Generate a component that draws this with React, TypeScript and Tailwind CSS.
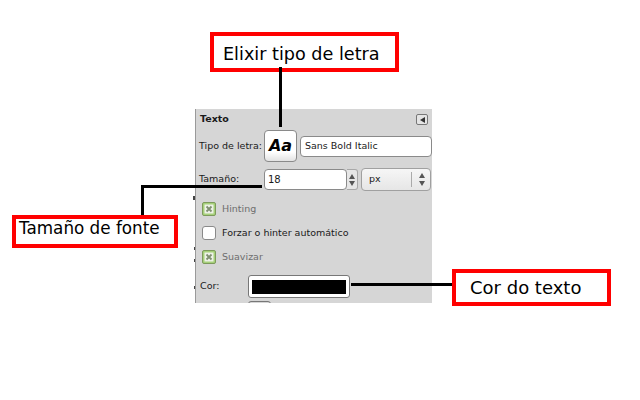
const gtkBorder = 'border border-[#8a8a8a] bg-white rounded-[4px]';

function Callout({ className, children }: { className: string; children: string }) {
  return (
    <div className={`absolute border-4 border-[#ff0000] bg-white flex items-center leading-none text-black font-['DejaVu_Sans',sans-serif] ${className}`}>
      {children}
    </div>
  );
}

function Check({ checked, label }: { checked?: boolean; label: string }) {
  return (
    <div className="flex h-[24px] items-center pl-[6px]">
      {checked ? (
        <span className="flex size-[14px] items-center justify-center rounded-[2px] border border-[#7d9a5c] bg-[#a6d07a]">
          <svg width="10" height="10" viewBox="0 0 10 10">
            <rect x="0.5" y="0.5" width="9" height="9" fill="#eef2e8" />
            <path d="M2.5 2.5L7.5 7.5M7.5 2.5L2.5 7.5" stroke="#7f8f70" strokeWidth="1.8" />
          </svg>
        </span>
      ) : (
        <span className="size-[14px] rounded-[3px] border border-[#8a8a8a] bg-white" />
      )}
      <span className={`ml-[6px] text-[9.5px] ${checked ? 'text-[#6e6e6e]' : 'text-[#1a1a1a]'}`}>{label}</span>
    </div>
  );
}

function Arrows({ gap }: { gap: string }) {
  return (
    <span className={`flex flex-col items-center ${gap}`}>
      <span className="h-0 w-0 border-x-[3px] border-b-[5px] border-x-transparent border-b-[#555]" />
      <span className="h-0 w-0 border-x-[3px] border-t-[5px] border-x-transparent border-t-[#555]" />
    </span>
  );
}

export default function App() {
  return (
    <div className="relative h-[400px] w-[640px] overflow-hidden bg-white pl-[195px] pt-[109px] font-['DejaVu_Sans',sans-serif]">
      <div className="h-[194px] w-[237px] overflow-hidden border-l border-[#9a9a9a] bg-[#d6d6d6] text-[#1a1a1a]">
        <div className="flex h-[21px] items-center justify-between px-[4px]">
          <span className="text-[9.5px] font-bold">Texto</span>
          <span className="flex h-[11px] w-[12px] items-center justify-center rounded-[2px] border border-[#777] bg-[#e4e4e4]">
            <span className="h-0 w-0 border-y-[3px] border-r-[5px] border-y-transparent border-r-[#333]" />
          </span>
        </div>

        <div className="flex items-center">
          <span className="ml-[3px] w-[65px] text-[9.5px]">Tipo de letra:</span>
          <div className="flex h-[32px] w-[33px] items-center justify-center rounded-[4px] border border-[#8a8a8a] bg-gradient-to-b from-white from-70% to-[#e2e2e2]">
            <span className="text-[16px] font-bold italic text-black">Aa</span>
          </div>
          <div className={`ml-[3px] flex h-[21px] w-[132px] items-center pl-[4px] text-[9.5px] ${gtkBorder}`}>Sans Bold Italic</div>
        </div>

        <div className="mt-[6px] flex items-center">
          <span className="ml-[3px] w-[65px] text-[9.5px]">Tamaño:</span>
          <div className={`flex h-[21px] w-[83px] items-center pl-[3px] text-[10px] ${gtkBorder}`}>18</div>
          <div className="flex h-[21px] w-[11px] items-center justify-center rounded-r-[3px] border border-l-0 border-[#a8a8a8] bg-[#e6e6e6]">
            <Arrows gap="gap-[2px]" />
          </div>
          <div className="ml-[3px] flex h-[23px] w-[70px] items-center rounded-[4px] border border-[#a0a0a0] bg-gradient-to-b from-[#f6f6f6] to-[#e6e6e6] pl-[7px] text-[9.5px]">
            <span className="w-[42px]">px</span>
            <span className="h-[15px] border-l border-[#aaa]" />
            <span className="ml-[7px]">
              <Arrows gap="gap-[3px]" />
            </span>
          </div>
        </div>

        <div className="mt-[6px]">
          <Check checked label="Hinting" />
          <Check label="Forzar o hinter automático" />
          <Check checked label="Suavizar" />
        </div>

        <div className="mt-[6px] flex items-center">
          <span className="ml-[4px] w-[48px] text-[9.5px]">Cor:</span>
          <div className="flex h-[23px] w-[102px] items-center justify-center rounded-[3px] border border-[#777] bg-white">
            <span className="h-[14px] w-[94px] bg-black" />
          </div>
        </div>
        <div className="ml-[52px] mt-[3px] h-[8px] w-[23px] rounded-[3px] border border-[#777] bg-[#d6d6d6]" />
      </div>

      <Callout className="left-[210px] top-[32px] h-[40px] w-[189px] pl-[9px] pt-[5px] text-[17.6px]">Elixir tipo de letra</Callout>
      <Callout className="left-[12px] top-[215px] h-[33px] w-[166px] pb-[6px] pl-[3px] text-[16.8px]">Tamaño de fonte</Callout>
      <Callout className="left-[452px] top-[269px] h-[37px] w-[159px] pl-[14px] text-[18px]">Cor do texto</Callout>

      {/* leader lines */}
      <div className="absolute left-[279px] top-[67px] h-[60px] w-[3px] bg-black" />
      <div className="absolute left-[141px] top-[185px] h-[30px] w-[3px] bg-black" />
      <div className="absolute left-[141px] top-[185px] h-[3px] w-[121px] bg-black" />
      <div className="absolute left-[351px] top-[283px] h-[3px] w-[101px] bg-black" />

      {/* specks left over along the panel edge */}
      <div className="absolute left-[193px] top-[196px] h-[4px] w-[2px] bg-[#444]" />
      <div className="absolute left-[194px] top-[247px] h-[3px] w-[1px] bg-[#444]" />
      <div className="absolute left-[194px] top-[259px] h-[3px] w-[1px] bg-[#444]" />
      <div className="absolute left-[194px] top-[286px] h-[3px] w-[1px] bg-[#444]" />
    </div>
  );
}
